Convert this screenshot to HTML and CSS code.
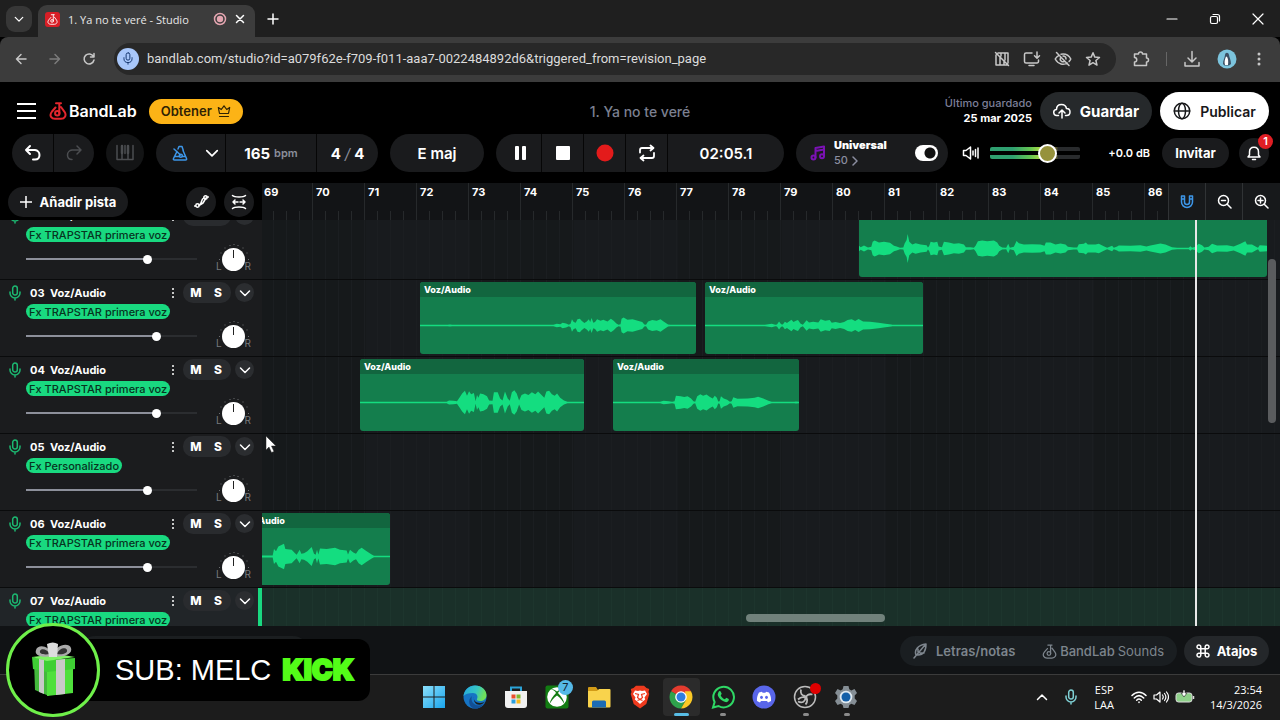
FILE: index.html
```html
<!DOCTYPE html>
<html lang="es">
<head>
  <meta charset="UTF-8">
  <title>1. Ya no te veré - Studio</title>
  <link rel="stylesheet" href="styles.css">
</head>
<body>
  <svg class="sprite" aria-hidden="true">
    <symbol id="mic" viewBox="0 0 12 16"><rect x="3.700" y="1" width="4.600" height="9" rx="2.300"/><path d="M1 7v1a5 5 0 0 0 10 0V7M6 13v2"/></symbol>
    <symbol id="down" viewBox="0 0 12 12"><path d="M1.500 4 6 8.500 10.500 4"/></symbol>
    <symbol id="logo" viewBox="0 0 18 18"><path d="M6.500 5.500 3 9.500C-.5 14 3 16.800 6 16.800h6c3.500 0 6-3.300 3.500-7L12 5M7 1.200h5M10.300 1.200v10"/><circle cx="8.300" cy="11.300" r="2.200"/></symbol>
    <symbol id="ticks" viewBox="0 0 34 30"><path d="M2.500 17v1M4 10.500v1M8 5.500v1M13 3v1M17 2v1M21 3v1M26 5.500v1M30 10.500v1M31.500 17v1"/></symbol>
    <symbol id="dots" viewBox="0 0 4 12"><circle cx="2" cy="2" r="1"/><circle cx="2" cy="6" r="1"/><circle cx="2" cy="10" r="1"/></symbol>
  </svg>

  <div class="tabs">
    <button class="tab-search" aria-label="Buscar pestañas"><svg class="icon" width="10" height="10"><use href="#down"/></svg></button>
    <div class="tab">
      <span class="favicon"><svg class="icon" width="11" height="11"><use href="#logo"/></svg></span>
      <span class="tab-title">1. Ya no te veré - Studio</span>
      <svg width="14" height="14" viewBox="0 0 14 14"><circle cx="7" cy="7" r="5.500" fill="none" stroke="#e3a5b0" stroke-width="1.500"/><circle cx="7" cy="7" r="3.200" fill="#e3a5b0"/></svg>
      <button class="plain" aria-label="Cerrar pestaña"><svg class="icon" width="10" height="10" viewBox="0 0 10 10"><path d="m1.500 1.500 7 7m0-7-7 7"/></svg></button>
    </div>
    <button class="plain new-tab" aria-label="Nueva pestaña"><svg class="icon" width="12" height="12" viewBox="0 0 12 12"><path d="M6 1v10M1 6h10"/></svg></button>
    <div class="window-buttons">
      <button class="plain" aria-label="Minimizar"><svg class="icon thin" width="12" height="12" viewBox="0 0 12 12"><path d="M1 6h10"/></svg></button>
      <button class="plain" aria-label="Restaurar"><svg class="icon thin" width="12" height="12" viewBox="0 0 12 12"><rect x="1.500" y="3.500" width="7" height="7" rx="1.500"/><path d="M4 1.500h4.500a2 2 0 0 1 2 2V8"/></svg></button>
      <button class="plain" aria-label="Cerrar"><svg class="icon thin" width="12" height="12" viewBox="0 0 12 12"><path d="m1 1 10 10m0-10L1 11"/></svg></button>
    </div>
  </div>

  <div class="browser-bar">
    <div class="nav">
      <button class="plain" aria-label="Atrás"><svg class="icon" width="14" height="14" viewBox="0 0 14 14"><path d="M12 7H2.500M7 2.500 2.500 7 7 11.500"/></svg></button>
      <button class="plain dim" aria-label="Adelante"><svg class="icon" width="14" height="14" viewBox="0 0 14 14"><path d="M2 7h9.500M7 2.500 11.500 7 7 11.500"/></svg></button>
      <button class="plain" aria-label="Recargar"><svg class="icon" width="14" height="14" viewBox="0 0 14 14"><path d="M11.500 4.500A5 5 0 1 0 12 8M12 1.500v3.500H8.500"/></svg></button>
    </div>
    <div class="omnibox">
      <span class="mic-badge"><svg class="icon thin" width="10" height="13"><use href="#mic"/></svg></span>
      <input class="url" type="text" aria-label="Dirección" value="bandlab.com/studio?id=a079f62e-f709-f011-aaa7-0022484892d6&amp;triggered_from=revision_page">
      <svg class="icon" width="16" height="16" viewBox="0 0 16 16"><path d="M2 4v10h11M4 2h10v10M6 6v8M10 10v4M7 2v3M11 2v7M1.500 1.500l13 13"/></svg>
      <svg class="icon" width="18" height="16" viewBox="0 0 18 16"><path d="M9 2H3a1.500 1.500 0 0 0-1.500 1.500v7A1.500 1.500 0 0 0 3 12h11a1.500 1.500 0 0 0 1.500-1.500V9M6 14.500h5M14 1v6M11.500 4.800 14 7.200l2.500-2.400"/></svg>
      <svg class="icon" width="18" height="16" viewBox="0 0 18 16"><path d="M5 4.300C3.300 5.200 2 6.500 1.200 8c3 5.500 8.500 6.500 12 4M7 3.200C11 2.500 15 4.500 16.800 8a9 9 0 0 1-1.700 2.400M6.500 6.500a3 3 0 0 0 4 4M9 5a3 3 0 0 1 3 3M2.500 1.500l12.500 13"/></svg>
      <svg class="icon" width="16" height="16" viewBox="0 0 16 16"><path d="m8 1.800 1.800 4.300 4.700.4-3.600 3 1.100 4.600L8 11.700 4 14.100l1.100-4.600-3.600-3 4.700-.4z"/></svg>
    </div>
    <div class="extensions">
      <svg class="icon" width="18" height="18" viewBox="0 0 18 18"><path d="M2.500 4h4a2 2 0 0 1 4 0h4v4a2 2 0 0 1 0 4v3.500h-12V12a2.200 2.200 0 0 0 0-4.500z"/></svg>
      <span class="bar-line"></span>
      <svg class="icon" width="18" height="18" viewBox="0 0 18 18"><path d="M9 1.500v10M5 8l4 4 4-4M2 12.500V16h14v-3.500"/></svg>
      <svg width="20" height="20" viewBox="0 0 20 20"><circle cx="10" cy="10" r="9.500" fill="#7cc4dd"/><path d="M8 6c.3-3 3.500-3 4 0 .2 2 2 5 2 9l-2 1.500H7.500L6 15c0-4 1.800-6 2-9z" fill="#3b4f63"/><path d="M9 7.500c2 0 2.500 4.500 2 8.500H8c-1-3 0-6 1-8.500z" fill="#fff"/></svg>
      <svg class="browser-menu" width="4" height="16" viewBox="0 0 4 16" fill="#c7c7c7"><circle cx="2" cy="3" r="1.500"/><circle cx="2" cy="8" r="1.500"/><circle cx="2" cy="13" r="1.500"/></svg>
    </div>
  </div>

  <header class="app-header">
    <div class="brand">
      <button class="plain" aria-label="Menú"><svg width="20" height="18" viewBox="0 0 20 18" stroke="#fff" stroke-width="2"><path d="M0 2h19M0 9h19M0 16h19"/></svg></button>
      <a class="logo" href="#"><svg class="icon red" width="18" height="18"><use href="#logo"/></svg>BandLab</a>
      <button class="get">Obtener <svg class="icon thin" width="14" height="14" viewBox="0 0 14 14"><path d="M2.500 9.500 1.300 3.500l3 2L7 1.800l2.700 3.700 3-2-1.200 6zM2.500 12.500h9"/></svg></button>
    </div>
    <h1 class="song">1. Ya no te veré</h1>
    <div class="save">
      <div class="saved"><span>Último guardado</span><b>25 mar 2025</b></div>
      <button class="pill guardar"><svg class="icon" width="18" height="16" viewBox="0 0 18 16"><path d="M5.500 12.500H4a3 3 0 0 1-.5-6C3.500 3 6 1.500 8.500 1.500S13 3 13.500 5.500c2 0 3.500 1.500 3.500 3.500s-1.500 3.500-3.500 3.500h-1M9 15V7.500M6 10l3-3 3 3"/></svg>Guardar</button>
      <button class="pill publicar"><svg class="icon" width="18" height="18" viewBox="0 0 18 18"><circle cx="9" cy="9" r="7.700"/><ellipse cx="9" cy="9" rx="3.500" ry="7.700"/><path d="M1.300 9h15.400"/></svg>Publicar</button>
    </div>
  </header>

  <div class="transport">
    <div class="group history">
      <button aria-label="Deshacer"><svg class="icon big" width="18" height="18" viewBox="0 0 18 18"><path d="M6 2 2 6l4 4M2 6h9a5 5 0 0 1 4.500 5c0 3-2 4.500-4.500 4.500H9"/></svg></button>
      <button class="off" aria-label="Rehacer"><svg class="icon" width="18" height="18" viewBox="0 0 18 18"><path d="m12 2 4 4-4 4M16 6H7a5 5 0 0 0-4.500 5c0 3 2 4.500 4.500 4.500"/></svg></button>
    </div>
    <button class="group piano off" aria-label="Instrumento"><svg class="icon" width="20" height="18" viewBox="0 0 20 18"><path d="M2 1.500v14h16v-14M7 9v6M13 9v6M10 1.500v8"/><path d="M7 2v7M13 2v7" stroke-width="2.500"/></svg></button>
    <div class="group tempo">
      <button class="metro" aria-label="Metrónomo"><svg class="icon blue" width="18" height="18" viewBox="0 0 18 18"><path d="M6 7.500 2.500 14.500q-.5 1.500 1 1.500h11q1.500 0 1-1.500L12 6.500M7 5 8 2.500h3l1.300 4M3 5l6.500 6M4.500 12.500h3.500m3.500 0h3"/><circle cx="9.800" cy="11.800" r="1.500"/></svg></button>
      <button class="more" aria-label="Opciones del metrónomo"><svg class="icon" width="14" height="14"><use href="#down"/></svg></button>
      <button class="bpm">165 <small>bpm</small></button>
      <button class="sign">4 <i>/</i> 4</button>
    </div>
    <button class="group key">E maj</button>
    <div class="group play">
      <button aria-label="Pausa"><svg width="14" height="16" viewBox="0 0 14 16" fill="#fff"><rect x="1" y="1" width="4" height="14" rx="1"/><rect x="8" y="1" width="4" height="14" rx="1"/></svg></button>
      <button aria-label="Detener"><svg width="16" height="16" viewBox="0 0 16 16"><rect x="1" y="1" width="14" height="14" rx="1" fill="#fff"/></svg></button>
      <button aria-label="Grabar"><svg width="18" height="18" viewBox="0 0 18 18"><circle cx="9" cy="9" r="8.500" fill="#e31b1b"/></svg></button>
      <button aria-label="Bucle"><svg class="icon loop" width="18" height="18" viewBox="0 0 18 18"><path d="M2 8.500V6q0-2 2-2h11M12.500 1.500 15.500 4l-3 2.500M16 9v3q0 2-2 2H3M5.500 11.500 2.500 14l3 2.500"/></svg></button>
      <button class="time">02:05.1</button>
    </div>
    <div class="group preset">
      <svg class="icon violet" width="16" height="16" viewBox="0 0 16 16"><path d="M5.500 12.500V3l8.500-1.500V11M5.500 6 14 4.500"/><circle cx="3.500" cy="12.500" r="2"/><circle cx="12" cy="11.300" r="2"/></svg>
      <a class="preset-name" href="#"><b>Universal</b><span>50 <svg class="icon" width="8" height="10" viewBox="0 0 8 10"><path d="m2 1 4 4-4 4"/></svg></span></a>
      <input class="switch" type="checkbox" checked aria-label="Activar Universal">
    </div>
    <div class="output">
      <svg class="icon" width="18" height="16" viewBox="0 0 18 16"><path d="M1.500 5.500v5H4l4.500 3.500V2L4 5.500zM11 6v4M13.500 4.500v7M16 3v10"/></svg>
      <input class="master" type="range" value="68" aria-label="Volumen general">
      <span class="db">+0.0 dB</span>
      <button class="pill invite">Invitar</button>
      <button class="round bell" aria-label="Notificaciones"><svg class="icon" width="16" height="16" viewBox="0 0 16 16"><path d="M2 12h12l-1.500-2V7c0-3-1.800-4.800-4.500-4.800S3.500 4 3.500 7v3zM6.500 14.500h3"/></svg><span class="count">1</span></button>
    </div>
  </div>

  <div class="editor-head">
    <div class="side-tools">
      <button class="pill add"><svg class="icon" width="12" height="12" viewBox="0 0 12 12"><path d="M6 0v12M0 6h12"/></svg>Añadir pista</button>
      <button class="round" aria-label="Automatización"><svg class="icon" width="15" height="15" viewBox="0 0 15 15"><circle cx="3.500" cy="11.500" r="1.700"/><circle cx="11.500" cy="3.500" r="1.700"/><path d="m5 11 1.500-1 2-5 1.500-1M9 9l3-5M5 11.500 9 9M13 3h1.500M.5 12h1"/></svg></button>
      <button class="round" aria-label="Ajustar vista"><svg class="icon" width="16" height="16" viewBox="0 0 16 16"><path d="M1.500 1.500c2 2 11 2 13 0M1.500 14.500c2-2 11-2 13 0M2 8h5m2 0h5M4 6 2 8l2 2M12 6l2 2-2 2"/></svg></button>
    </div>
    <div class="ruler">
      <span>69</span><span>70</span><span>71</span><span>72</span><span>73</span><span>74</span><span>75</span><span>76</span><span>77</span><span>78</span><span>79</span><span>80</span><span>81</span><span>82</span><span>83</span><span>84</span><span>85</span><span>86</span>
    </div>
    <div class="zoom-tools">
      <button aria-label="Imán"><svg class="icon blue" width="14" height="14" viewBox="0 0 14 14"><path d="M1.500 1h3v6a2.500 2.500 0 0 0 5 0V1h3v6a5.500 5.500 0 0 1-11 0zM1.500 4h3m5 0h3"/></svg></button>
      <button aria-label="Alejar"><svg class="icon" width="15" height="15" viewBox="0 0 15 15"><circle cx="6.500" cy="6.500" r="5"/><path d="M4.500 6.500h4M10.500 10.500l3.500 3.500"/></svg></button>
      <button aria-label="Acercar"><svg class="icon" width="15" height="15" viewBox="0 0 15 15"><circle cx="6.500" cy="6.500" r="5"/><path d="M4 6.500h5M6.500 4v5M10.500 10.500l3.500 3.500"/></svg></button>
    </div>
  </div>

  <main class="tracks">
    <section class="track">
      <div class="track-head">
        <div class="track-row"><svg class="icon green" width="12" height="16"><use href="#mic"/></svg><b>02</b><b class="name">Voz/Audio</b><button class="dots" aria-label="Opciones"><svg width="4" height="12"><use href="#dots"/></svg></button><span class="ms"><button>M</button><button>S</button></span><button class="fold" aria-label="Plegar"><svg class="icon" width="12" height="12"><use href="#down"/></svg></button></div>
        <button class="fx">Fx TRAPSTAR primera voz</button>
        <div class="levels"><input class="level" style="--level: 71%" type="range" value="72" aria-label="Volumen 02"><span class="pan"><svg class="ticks" width="34" height="30"><use href="#ticks"/></svg>L<input class="knob" type="range" aria-label="Panorama 02">R</span></div>
      </div>
      <div class="lane">
        <div class="clip" style="left: 597px; width: 408px"><span>&nbsp;</span><svg viewBox="55 -86 1225 172" preserveAspectRatio="none" data-wave="55,8 60,4 70,9 82,3 92,5 96,20 102,24 115,18 130,20 148,17 160,8 168,6 178,2 188,3 192,15 198,26 201,44 206,20 215,12 225,16 240,12 258,10 262,3 266,8 270,20 280,18 290,20 294,6 304,4 310,20 325,18 340,14 355,16 370,12 376,4 390,4 400,1 405,8 412,22 425,24 440,22 460,24 470,18 476,8 485,3 497,1 503,14 508,2 520,5 528,23 535,16 550,12 575,13 600,12 612,8 616,18 630,18 645,12 660,15 675,12 682,5 700,3 710,3 715,13 730,14 736,18 742,12 765,12 775,14 790,7 800,2 815,8 820,2 830,6 835,9 870,8 900,10 918,6 930,9 960,15 975,12 995,4 1010,1 1045,1 1050,7 1055,2 1065,5 1075,14 1085,10 1092,3 1105,5 1115,14 1130,9 1160,10 1180,6 1200,14 1215,22 1220,12 1235,12 1247,5 1253,2 1258,10 1270,9 1280,8"></svg></div>
      </div>
    </section>

    <section class="track">
      <div class="track-head">
        <div class="track-row"><svg class="icon green" width="12" height="16"><use href="#mic"/></svg><b>03</b><b class="name">Voz/Audio</b><button class="dots" aria-label="Opciones"><svg width="4" height="12"><use href="#dots"/></svg></button><span class="ms"><button>M</button><button>S</button></span><button class="fold" aria-label="Plegar"><svg class="icon" width="12" height="12"><use href="#down"/></svg></button></div>
        <button class="fx">Fx TRAPSTAR primera voz</button>
        <div class="levels"><input class="level" style="--level: 77%" type="range" value="78" aria-label="Volumen 03"><span class="pan"><svg class="ticks" width="34" height="30"><use href="#ticks"/></svg>L<input class="knob" type="range" aria-label="Panorama 03">R</span></div>
      </div>
      <div class="lane">
        <div class="clip" style="left: 158px; width: 276px"><span>Voz/Audio</span><svg viewBox="58 -83 801 166" preserveAspectRatio="none" data-wave="58,1 138,1 145,3 152,1 445,1 455,5 465,4 472,8 482,6 490,1 495,5 499,18 504,10 510,8 515,18 522,20 527,14 535,7 542,12 548,18 552,10 556,22 561,8 566,10 572,18 582,14 590,17 602,12 612,20 620,14 628,6 634,1 640,4 643,20 649,23 660,17 675,18 690,14 703,10 709,3 714,2 720,12 732,16 745,14 756,18 765,12 778,3 785,1 859,1"></svg></div>
        <div class="clip" style="left: 443px; width: 218px"><span>Voz/Audio</span><svg viewBox="886 -83 633 166" preserveAspectRatio="none" data-wave="886,1 1060,1 1070,4 1080,5 1090,2 1095,3 1101,12 1107,4 1112,3 1118,11 1124,7 1130,12 1137,17 1143,10 1150,14 1156,16 1163,6 1170,1 1175,8 1181,15 1188,9 1200,11 1215,9 1222,18 1235,14 1248,16 1254,8 1265,10 1278,7 1290,10 1300,16 1312,18 1322,13 1332,19 1345,12 1365,11 1390,8 1410,5 1427,3 1430,1 1519,1"></svg></div>
      </div>
    </section>

    <section class="track">
      <div class="track-head">
        <div class="track-row"><svg class="icon green" width="12" height="16"><use href="#mic"/></svg><b>04</b><b class="name">Voz/Audio</b><button class="dots" aria-label="Opciones"><svg width="4" height="12"><use href="#dots"/></svg></button><span class="ms"><button>M</button><button>S</button></span><button class="fold" aria-label="Plegar"><svg class="icon" width="12" height="12"><use href="#down"/></svg></button></div>
        <button class="fx">Fx TRAPSTAR primera voz</button>
        <div class="levels"><input class="level" style="--level: 77%" type="range" value="78" aria-label="Volumen 04"><span class="pan"><svg class="ticks" width="34" height="30"><use href="#ticks"/></svg>L<input class="knob" type="range" aria-label="Panorama 04">R</span></div>
      </div>
      <div class="lane">
        <div class="clip" style="left: 98px; width: 224px"><span>Voz/Audio</span><svg viewBox="-116 -83 649 166" preserveAspectRatio="none" data-wave="-116,1 135,1 142,6 155,5 165,4 172,14 180,26 188,34 194,20 200,33 206,24 214,28 219,4 223,22 227,14 232,26 242,24 252,18 258,6 268,5 272,30 283,30 290,12 297,6 304,32 312,12 318,5 324,30 331,36 338,26 345,6 352,22 362,26 372,22 382,30 392,24 400,32 410,22 418,14 424,32 432,34 440,24 448,20 455,26 464,14 475,6 485,1 533,1"></svg></div>
        <div class="clip" style="left: 351px; width: 186px"><span>Voz/Audio</span><svg viewBox="618 -83 541 166" preserveAspectRatio="none" data-wave="618,1 740,1 755,2 765,5 780,4 790,1 797,4 801,20 815,18 825,16 835,18 845,12 852,4 857,2 863,18 872,24 880,20 890,23 900,16 908,12 914,20 920,14 924,3 928,4 932,18 940,12 950,8 958,2 963,4 968,15 980,11 1010,12 1030,14 1040,17 1055,12 1070,5 1080,1 1145,1 1150,3 1159,1"></svg></div>
      </div>
    </section>

    <section class="track">
      <div class="track-head">
        <div class="track-row"><svg class="icon green" width="12" height="16"><use href="#mic"/></svg><b>05</b><b class="name">Voz/Audio</b><button class="dots" aria-label="Opciones"><svg width="4" height="12"><use href="#dots"/></svg></button><span class="ms"><button>M</button><button>S</button></span><button class="fold" aria-label="Plegar"><svg class="icon" width="12" height="12"><use href="#down"/></svg></button></div>
        <button class="fx">Fx Personalizado</button>
        <div class="levels"><input class="level" style="--level: 71%" type="range" value="72" aria-label="Volumen 05"><span class="pan"><svg class="ticks" width="34" height="30"><use href="#ticks"/></svg>L<input class="knob" type="range" aria-label="Panorama 05">R</span></div>
      </div>
      <div class="lane"></div>
    </section>

    <section class="track">
      <div class="track-head">
        <div class="track-row"><svg class="icon green" width="12" height="16"><use href="#mic"/></svg><b>06</b><b class="name">Voz/Audio</b><button class="dots" aria-label="Opciones"><svg width="4" height="12"><use href="#dots"/></svg></button><span class="ms"><button>M</button><button>S</button></span><button class="fold" aria-label="Plegar"><svg class="icon" width="12" height="12"><use href="#down"/></svg></button></div>
        <button class="fx">Fx TRAPSTAR primera voz</button>
        <div class="levels"><input class="level" style="--level: 71%" type="range" value="72" aria-label="Volumen 06"><span class="pan"><svg class="ticks" width="34" height="30"><use href="#ticks"/></svg>L<input class="knob" type="range" aria-label="Panorama 06">R</span></div>
      </div>
      <div class="lane">
        <div class="clip" style="left: -28px; width: 156px"><span>Voz/Audio</span><svg viewBox="42 -85 468 170" preserveAspectRatio="none" data-wave="42,2 126,3 150,3 158,3 162,22 168,16 175,30 192,38 196,22 215,20 225,10 230,5 239,20 244,8 252,10 262,16 275,28 282,8 287,5 291,20 295,6 300,24 320,22 345,26 360,20 380,18 384,6 390,20 400,12 408,8 416,20 425,26 440,16 455,6 462,1 510,1"></svg></div>
      </div>
    </section>

    <section class="track selected">
      <div class="track-head">
        <div class="track-row"><svg class="icon green" width="12" height="16"><use href="#mic"/></svg><b>07</b><b class="name">Voz/Audio</b><button class="dots" aria-label="Opciones"><svg width="4" height="12"><use href="#dots"/></svg></button><span class="ms"><button>M</button><button>S</button></span><button class="fold" aria-label="Plegar"><svg class="icon" width="12" height="12"><use href="#down"/></svg></button></div>
        <button class="fx">Fx TRAPSTAR primera voz</button>
      </div>
      <div class="lane"></div>
    </section>

    <div class="playhead"></div>
    <div class="scroll-v"></div>
    <div class="scroll-h"></div>
    <svg class="cursor" width="12" height="19" viewBox="0 0 12 19"><path d="M1 1v14l3-3 2.500 5.500 2.500-1L6.500 11H11z" fill="#fff" stroke="#222" stroke-width=".5"/></svg>
  </main>

  <footer class="app-footer">
    <div class="left-panel"></div>
    <div class="group panels">
      <button><svg class="icon" width="14" height="16" viewBox="0 0 14 16"><path d="M1 15 12 2M3 12c-2-5 2-10 10-11 0 6-2 11-8 11zM5 9V6m2 4h4"/></svg>Letras/notas</button>
      <button class="sounds"><svg class="icon" width="15" height="15"><use href="#logo"/></svg><b>BandLab</b> Sounds</button>
    </div>
    <button class="pill shortcuts"><svg class="icon" width="14" height="14" viewBox="0 0 14 14"><path d="M4.800 4.800h4.400v4.400H4.800zM4.800 4.800H3a1.900 1.900 0 1 1 1.800-1.900zM9.200 4.800V3a1.900 1.900 0 1 1 1.900 1.800zM9.200 9.200H11a1.900 1.900 0 1 1-1.800 1.900zM4.800 9.200V11a1.900 1.900 0 1 1-1.900-1.800z"/></svg>Atajos</button>
  </footer>

  <div class="taskbar">
    <div class="apps">
      <a href="#" aria-label="Inicio"><svg width="24" height="24" viewBox="0 0 24 24"><defs><linearGradient id="win" x2="1" y2="1"><stop stop-color="#8be0fb"/><stop offset="1" stop-color="#19a4ec"/></linearGradient></defs><path d="M1 1h10.500v10.500H1zM12.500 1H23v10.500H12.500zM1 12.500h10.500V23H1zM12.500 12.500H23V23H12.500z" fill="url(#win)"/></svg></a>
      <a href="#" aria-label="Edge"><svg width="24" height="24" viewBox="0 0 24 24"><defs><linearGradient id="edge" x2="1" y2=".3"><stop stop-color="#25a7e0"/><stop offset=".6" stop-color="#36c6c3"/><stop offset="1" stop-color="#6fe05a"/></linearGradient></defs><circle cx="12" cy="12" r="11.500" fill="#1674c4"/><path d="M.5 11C1.500 4.500 6.500.5 12 .5c7 0 11.500 5 11.500 9.500 0 4-3 6-6.500 6-2.500 0-3.500-1-3-2 1.500-3-.5-6-4-6-4.500 0-8 1-9.500 3z" fill="url(#edge)"/><path d="M9 11c-2 5 2 9.500 6.500 9.500 3 0 5-1 6.300-2.500C20 21.500 16 23.500 12 23.500 6 23 4 15 9 11z" fill="#124f94"/><path d="M11 12c-1 3 2 6 6 6 2.500 0 4-.8 5-1.500l-2 2c-5 3-10 0-9-6.500z" fill="#1c1c1c"/></svg></a>
      <a href="#" aria-label="Tienda"><svg width="24" height="24" viewBox="0 0 24 24"><path d="M7 7V2.500h10V7" fill="none" stroke="#2ba3d8" stroke-width="2"/><path d="M1 6h22v14a3 3 0 0 1-3 3H4a3 3 0 0 1-3-3z" fill="#f1f1f1"/><path d="M7.500 9.500h4v4h-4z" fill="#e94f2e"/><path d="M12.500 9.500h4v4h-4z" fill="#7fb82c"/><path d="M7.500 14.500h4v4h-4z" fill="#2b9fe0"/><path d="M12.500 14.500h4v4h-4z" fill="#f7b91d"/></svg></a>
      <a href="#" aria-label="Xbox"><svg width="24" height="24" viewBox="0 0 24 24"><rect x=".5" y=".5" width="23" height="23" rx="2" fill="#127c12"/><circle cx="12" cy="12" r="9.800" fill="#fff"/><path d="M6 4.500C8 3.500 10 5 12 6.500 14 5 16 3.500 18 4.500c-2 0-4 1.500-5 3.500 3 3 6 7 6.500 11.500C18 16 15 12.500 12 10.500 9 12.500 6 16 4.500 19.500 5 15 8 11 11 8 10 6 8 4.500 6 4.500z" fill="#127c12"/></svg><span class="xbox-count">7</span></a>
      <a href="#" aria-label="Archivos"><svg width="24" height="24" viewBox="0 0 24 24"><path d="M1 3q0-1 1-1h7l2 3v4H1z" fill="#d29b17"/><path d="M1 6h9l2-2h10.500q1 0 1 1v16.500q0 1-1 1H2q-1 0-1-1z" fill="#f9d34c"/><path d="M5 22.500V17q0-1.500 1.500-1.500h11Q19 15.500 19 17v5.500z" fill="#1d6cb5"/></svg></a>
      <a href="#" aria-label="Brave"><svg width="24" height="24" viewBox="0 0 24 24"><path d="M8 .8h8l2.500 2.200 2.700 1-.7 3 .8 2-3 10L12 23.500 5.700 19l-3-10 .8-2-.7-3 2.700-1z" fill="#ee3a1e"/><path d="M7 5.500 10 6l2-.5L14 6l3-.5 2 3.500-2.500 3.500.7 2-2.500 2L12 19l-2.700-2.500-2.500-2 .7-2L5 9z" fill="#fff"/><path d="m7 8.500 3.500 1-1 3 2.500 2 2.500-2-1-3 3.500-1M9.500 15.500l2.500-1 2.500 1" fill="none" stroke="#ee3a1e" stroke-width="1.200"/></svg></a>
      <a class="active" href="#" aria-label="Chrome"><svg width="24" height="24" viewBox="0 0 24 24"><path d="M12 12 2 6.300A11.500 11.500 0 0 1 22 6.300z" fill="#e33b2e"/><path d="M2 6.300A11.500 11.500 0 0 0 12 23.500l5-8.500-5-3z" fill="#2ea24c"/><path d="M22 6.300A11.500 11.500 0 0 1 12 23.500L17 15l-1-8.700z" fill="#fbc926"/><circle cx="12" cy="12" r="5.800" fill="#fff"/><circle cx="12" cy="12" r="4.500" fill="#2f7de1"/></svg></a>
      <a class="open" href="#" aria-label="WhatsApp"><svg width="24" height="24" viewBox="0 0 24 24"><path d="M2 22.500 3.600 17A10.300 10.300 0 1 1 7.500 21z" fill="#1c1c1c" stroke="#2fd765" stroke-width="2"/><path d="M7.500 7c1-1.500 2-1 2.500.3l.7 1.500-1 1.600c1 2 2.200 3 4.200 3.800l1.400-1.500 2.500 1.200c.5 2-1.600 3.500-3.300 3.200C10.500 16 7 12.500 6.700 9.500z" fill="#2fd765"/></svg></a>
      <a href="#" aria-label="Discord"><svg width="24" height="24" viewBox="0 0 24 24"><circle cx="12" cy="12" r="11.500" fill="#5966ea"/><path d="M7 7.500 10 6.700l.6 1h2.800l.6-1 3 .8c1.500 2.500 2.300 5.500 2 8.500L16 17.500l-1-1.500H9l-1 1.500L5 16c-.3-3 .5-6 2-8.500z" fill="#fff"/><ellipse cx="9.500" cy="12.300" rx="1.400" ry="1.600" fill="#5966ea"/><ellipse cx="14.500" cy="12.300" rx="1.400" ry="1.600" fill="#5966ea"/></svg></a>
      <a class="open" href="#" aria-label="OBS"><svg width="24" height="24" viewBox="0 0 24 24"><circle cx="12" cy="12" r="10.500" fill="#222" stroke="#bcbcbc" stroke-width="1.500"/><path d="M8 4.500c-1 4 1 6.500 4.500 6.500M19.500 9.500c-4-1-6.500 1-7 4M5 16.500c4 2 7 .5 7.500-3.500M12.500 11c2 2 2.500 6 0 8.500M12 12.500c-2.500-1-5 0-7 2" fill="none" stroke="#bcbcbc" stroke-width="1.800"/></svg><span class="rec"></span></a>
      <a class="open" href="#" aria-label="Configuración"><svg width="24" height="24" viewBox="0 0 24 24"><path d="M9.500 1h5l.8 3.200 2 1.200L20.500 4l2.500 4-2.300 2.500v3L23 16l-2.500 4-3.200-1.300-2 1.200-.8 3.100h-5l-.8-3.100-2-1.200L3.500 20 1 16l2.300-2.500v-3L1 8l2.500-4 3.200 1.400 2-1.200z" fill="#858e95"/><circle cx="12" cy="12" r="6.300" fill="#dfe9f1"/><circle cx="12" cy="12" r="4.500" fill="#145fa8"/></svg></a>
    </div>
    <div class="tray">
      <svg class="icon" width="12" height="12" viewBox="0 0 12 12"><path d="M1.500 8.500 6 4l4.500 4.500"/></svg>
      <svg class="icon teal" width="12" height="16"><use href="#mic"/></svg>
      <span class="lang">ESP<br>LAA</span>
      <div class="status">
        <svg class="icon" width="16" height="14" viewBox="0 0 16 14"><path d="M1 5.500c4-4.500 10-4.500 14 0M3.300 8c3-3 6.400-3 9.400 0M5.700 10.200c1.500-1.500 3.100-1.500 4.600 0M8 12v.5"/></svg>
        <svg class="icon thin" width="16" height="14" viewBox="0 0 16 14"><path d="M1 5v4h2.500L7 12V2L3.500 5zM9.500 5q1.500 2 0 4M11.500 3.500q2.800 3.500 0 7M13.500 2q4 5 0 10"/></svg>
        <svg width="20" height="14" viewBox="0 0 20 14"><rect x="1" y="3" width="16" height="9" rx="2.500" fill="#8fd18a" stroke="#ddd"/><path d="M18.500 6v3" stroke="#ddd" stroke-width="1.500"/><path d="M8 0h2v3h2l-3 4-3-4h2z" fill="#fff" stroke="#1c1c1c" stroke-width=".6"/></svg>
      </div>
      <span class="clock">23:54<br>14/3/2026</span>
    </div>
  </div>

  <div class="sub-alert">
    <div class="gift">
      <svg width="48" height="56" viewBox="0 0 48 56"><path d="M5 18 20 20v34L6 48z" fill="#44b83c"/><path d="M18 20h26v31l-26 3z" fill="#4fe03c"/><path d="M3 15 18 18v12L4 27zM18 18l28-2v11l-28 3z" fill="#3fcf34"/><path d="M3 15 28 12l18 3-28 4z" fill="#7df364"/><path d="M10 17l5 1v34l-5-2zM27 18l9-1v35l-9 1z" fill="#c9c9c9"/><path d="M24 14C20 3 9 2 7 8s6 8 17 6zM24 14C26 2 40 0 42 6s-7 10-18 8z" fill="#aaa"/><path d="M21 12c-3-5-9-6-10-3s4 4 10 3zM28 12c2-6 9-7 10-4s-4 5-10 4z" fill="#333"/><path d="M18 2q6-3 11 0l-1 13h-8z" fill="#ddd"/></svg>
    </div>
    <p>SUB: MELC <strong>KICK</strong></p>
  </div>

  <script src="waves.js"></script>
</body>
</html>
```

FILE: styles.css
```css
* {
  box-sizing: border-box;
}

body {
  margin: 0;
  height: 100vh;
  display: flex;
  flex-direction: column;
  overflow: hidden;
  position: relative;
  background: #000;
  color: #fff;
  font-family: Inter, "Liberation Sans", sans-serif;
  font-size: 12px;
}

button, input {
  font: inherit;
  color: inherit;
  margin: 0;
}

button {
  border: none;
  padding: 0;
  background: none;
  display: flex;
  align-items: center;
  justify-content: center;
  white-space: nowrap;
  cursor: pointer;
}

a {
  color: inherit;
  text-decoration: none;
}

svg {
  display: block;
  flex: none;
}

.sprite {
  position: absolute;
  width: 0;
  height: 0;
}

.icon {
  fill: none;
  stroke: currentColor;
  stroke-width: 1.5;
  stroke-linecap: round;
  stroke-linejoin: round;
}

.thin { stroke-width: 1.2; }
.loop { stroke-width: 1.8; }
.big { stroke-width: 2; }
.red { color: #e3262e; stroke-width: 2; }
.blue { color: #3d96e8; }
.violet { color: #7a12b4; stroke-width: 2; }
.green { color: #1cb871; }
.teal { color: #7fd0d4; }

/* browser */
.tabs {
  flex: none;
  height: 37px;
  display: flex;
  align-items: center;
  padding-left: 6px;
  background: #1f1f1f;
  font-family: "Open Sans", sans-serif;
}

.tab-search {
  width: 26px;
  height: 26px;
  border-radius: 9px;
  background: #373737;
}

.tab {
  align-self: flex-end;
  width: 217px;
  height: 32px;
  margin-left: 6px;
  padding: 0 10px 4px 7px;
  display: flex;
  align-items: center;
  gap: 8px;
  border-radius: 9px 9px 0 0;
  background: #3c3c3c;
}

.tab-title {
  flex: 1;
  font-size: 11px;
  color: #e8e8e8;
  white-space: nowrap;
}

.favicon {
  width: 15px;
  height: 15px;
  border-radius: 3px;
  display: grid;
  place-items: center;
  background: #d81e26;
}

.new-tab {
  margin-left: 12px;
}

.window-buttons {
  margin-left: auto;
  display: flex;
  gap: 31px;
  padding-right: 16px;
}

.browser-bar {
  flex: none;
  height: 45px;
  display: flex;
  align-items: center;
  padding: 0 19px 2px 14px;
  background: #3c3c3c;
  color: #c7c7c7;
  border-radius: 8px 8px 0 0;
}

.nav {
  display: flex;
  gap: 20px;
  width: 100px;
}

.dim {
  color: #7c7c7c;
}

.omnibox {
  flex: 1;
  height: 32px;
  display: flex;
  align-items: center;
  gap: 13px;
  padding: 0 15px 0 3px;
  border-radius: 16px;
  background: #282828;
}

.mic-badge {
  width: 22px;
  height: 22px;
  border-radius: 50%;
  display: grid;
  place-items: center;
  background: #a8c7fa;
  color: #16366f;
}

.url {
  flex: 1;
  min-width: 0;
  margin-left: -5px;
  padding: 0;
  border: none;
  outline: none;
  background: none;
  color: #dcdcdc;
  font-family: Roboto, sans-serif;
  font-size: 13px;
}

.extensions {
  display: flex;
  align-items: center;
  gap: 16px;
  padding-left: 16px;
}

.browser-menu {
  margin-left: 4px;
}

.bar-line {
  width: 1px;
  height: 14px;
  background: #666;
}

/* app header */
.app-header {
  flex: none;
  display: grid;
  grid-template-columns: 1fr auto 1fr;
  align-items: center;
  height: 52px;
  padding: 6px 11px 0;
}

.brand {
  display: flex;
  align-items: center;
  gap: 12px;
  padding-left: 6px;
}

.logo {
  display: flex;
  align-items: center;
  gap: 2px;
  font-size: 16px;
  font-weight: 600;
}

.get {
  height: 25px;
  padding: 0 12px;
  gap: 5px;
  border-radius: 13px;
  background: #fcb316;
  color: #2f2204;
  font-size: 13px;
  font-weight: 600;
}

.song {
  margin: 0;
  color: #7c8090;
  font-size: 14px;
  font-weight: 500;
}

.save {
  display: flex;
  align-items: center;
  justify-content: flex-end;
  gap: 8px;
}

.saved {
  display: flex;
  flex-direction: column;
  text-align: right;
  font-size: 11px;
  line-height: 15px;
}

.saved span {
  color: #7c7f98;
  font-weight: 500;
}

.pill {
  height: 30px;
  padding: 0 12px;
  gap: 8px;
  border-radius: 19px;
  background: #1a1b1d;
  font-weight: 700;
}

.guardar, .publicar {
  height: 38px;
  gap: 9px;
  font-size: 14px;
}

.guardar {
  width: 112px;
  background: #26292b;
  font-size: 15px;
}

.publicar {
  width: 109px;
  background: #fff;
  color: #17181a;
  font-weight: 600;
}

/* transport */
.transport {
  flex: none;
  display: flex;
  align-items: center;
  gap: 12px;
  height: 38px;
  margin-bottom: 11px;
  padding: 0 11px 0 12px;
}

.group {
  flex: none;
  display: flex;
  align-items: center;
  height: 38px;
  border-radius: 19px;
  background: #1a1b1d;
  overflow: hidden;
  font-size: 15px;
  font-weight: 700;
}

.group > button {
  height: 100%;
}

.group > button + button {
  border-left: 1px solid #060606;
}

.history > button { width: 41px; }
.off { color: #4b4d50; }
.piano { width: 38px; background: #131415; }
.metro { width: 42px; padding-left: 6px; }
.group > .more { width: 27px; border-left: none; }
.bpm { width: 91px; gap: 4px; }
.bpm small { color: #8b8e9b; font-size: 11px; font-weight: 600; }
.sign { width: 62px; gap: 4px; }
.sign i { color: #8b8e9b; font-weight: 400; }
.key { width: 94px; font-weight: 600; }
.play > button { width: 42px; }
.play > button:first-child { width: 45px; padding-left: 4px; }
.play > .time { width: 117px; font-weight: 600; }

.preset {
  width: 152px;
  padding: 0 10px 0 14px;
}

.preset-name {
  flex: 1;
  margin-left: 8px;
  font-size: 11px;
  line-height: 15px;
}

.preset-name b {
  display: block;
}

.preset-name span {
  display: flex;
  align-items: center;
  gap: 3px;
  color: #8b8ea0;
  font-weight: 500;
}

.switch {
  appearance: none;
  width: 23px;
  height: 16px;
  border-radius: 8px;
  background: radial-gradient(circle at 15px 8px, #111 5px, #fff 6px);
}

.output {
  margin-left: auto;
  display: flex;
  align-items: center;
  gap: 10px;
}

.master {
  appearance: none;
  width: 90px;
  height: 12px;
  border-radius: 2px;
  background:
    linear-gradient(#000, #000) center / 100% 4px no-repeat,
    linear-gradient(90deg, #2fa070 25%, #65c552 45%, #b5dc43 58%, #a3983a 70%, #292b2d 76%);
}

.master::-webkit-slider-thumb {
  appearance: none;
  width: 19px;
  height: 19px;
  border: 2px solid #fff;
  border-radius: 50%;
  background: #96923c;
}

.db {
  width: 60px;
  text-align: right;
  font-size: 11px;
  font-weight: 600;
}

.invite {
  width: 67px;
  margin-left: 2px;
  padding: 0;
  font-size: 13px;
}

.round {
  width: 30px;
  height: 30px;
  border-radius: 50%;
  background: #1a1b1d;
}

.bell {
  position: relative;
}

.count {
  position: absolute;
  top: -4px;
  right: -4px;
  width: 15px;
  height: 15px;
  border-radius: 50%;
  background: #e01e24;
  font-size: 11px;
  font-weight: 600;
  line-height: 15px;
}

/* ruler */
.editor-head {
  flex: none;
  height: 37px;
  display: flex;
}

.side-tools {
  flex: none;
  width: 262px;
  display: flex;
  align-items: center;
  gap: 8px;
  padding: 0 8px;
}

.add {
  width: 120px;
  margin-right: auto;
  font-size: 13px;
}

.ruler {
  flex: 1;
  min-width: 0;
  display: flex;
  overflow: hidden;
  background: #121416;
}

.ruler span {
  flex: none;
  width: 52px;
  padding: 2px 0 0 3px;
  border-left: 1px solid #26292b;
  font-size: 11px;
  font-weight: 700;
  background: repeating-linear-gradient(90deg, transparent 0 12px, #26292b 12px 13px) bottom / 100% 9px no-repeat;
}

.ruler span:first-child {
  margin-left: -2px;
}

.zoom-tools {
  display: flex;
  padding-right: 1px;
  background: #17191b;
}

.zoom-tools button {
  width: 37px;
  border-left: 1px solid #303335;
}

/* tracks */
.tracks {
  flex: 1;
  min-height: 0;
  position: relative;
  overflow: hidden;
}

.track {
  display: flex;
  height: 77px;
}

.track:first-child {
  margin-top: -17px;
}

.track-head {
  flex: none;
  width: 262px;
  padding: 2px 8px 0 9px;
  background: #1b1c1e;
  border-bottom: 1px solid #0a0b0c;
}

.track-row {
  display: flex;
  align-items: center;
  height: 21px;
  font-size: 11px;
}

.track-row b:first-of-type {
  width: 20px;
  margin-left: 9px;
}

.name {
  flex: 1;
}

.dots {
  width: 12px;
  height: 20px;
  margin-right: 4px;
  fill: #fff;
}

.ms {
  display: flex;
  padding: 0 2px;
  border-radius: 10px;
  background: #292b2e;
}

.ms button {
  width: 22px;
  height: 21px;
  font-size: 12px;
  font-weight: 800;
}

.fold {
  width: 19px;
  height: 19px;
  margin-left: 4px;
  border-radius: 50%;
  background: #2b2d30;
}

.fx {
  height: 15px;
  margin: 1px 0 0 17px;
  padding: 0 3px;
  border-radius: 8px;
  background: #19d980;
  color: #07341f;
  font-size: 11px;
  font-weight: 500;
}

.levels {
  display: flex;
  align-items: center;
  justify-content: space-between;
  height: 34px;
  padding: 0 3px 0 17px;
}

.level {
  appearance: none;
  width: 171px;
  height: 2px;
  background: linear-gradient(90deg, #8d909b var(--level), #2b2d30 var(--level));
}

.level::-webkit-slider-thumb {
  appearance: none;
  width: 9px;
  height: 9px;
  border-radius: 50%;
  background: #fff;
}

.pan {
  display: flex;
  align-items: flex-end;
  position: relative;
  color: #77797c;
  font-size: 10px;
  line-height: 10px;
}

.ticks {
  position: absolute;
  left: 1px;
  top: -6px;
  stroke: #6c6e71;
}

.knob {
  appearance: none;
  position: relative;
  width: 23px;
  height: 23px;
  border-radius: 50%;
  background: linear-gradient(#222, #222) 11px 2px / 1px 8px no-repeat, #fff;
}

.knob::-webkit-slider-thumb {
  appearance: none;
  opacity: 0;
}

.lane {
  flex: 1;
  position: relative;
  overflow: hidden;
  border-bottom: 1px solid #0a0b0c;
  background:
    repeating-linear-gradient(90deg, #1b1e21 0 1px, transparent 1px 13px) -2px 0 / 2600px 100%,
    repeating-linear-gradient(90deg, #16191b 0 104px, #181b1e 104px 208px);
}

.clip {
  position: absolute;
  top: 2px;
  height: 72px;
  display: flex;
  flex-direction: column;
  overflow: hidden;
  border-radius: 3px;
  background: #147e4d;
}

/* the first track is scrolled under the ruler */
.track:first-child .clip {
  background: #147e4d;
}

.clip span {
  flex: none;
  height: 15px;
  padding-left: 4px;
  background: #12663f;
  font-size: 9px;
  font-weight: 800;
  line-height: 15px;
}

.clip svg {
  width: 100%;
  flex: 1;
  min-height: 0;
  fill: #14dd80;
}

.selected .track-head {
  background: #212528;
  border-right: 4px solid #19d980;
  padding-right: 4px;
}

.selected .lane {
  background:
    repeating-linear-gradient(90deg, #1d352d 0 1px, transparent 1px 13px) -2px 0 / 2600px 100%,
    #1a3029;
}

.playhead {
  position: absolute;
  top: 0;
  bottom: 0;
  right: 83px;
  width: 2px;
  background: #e8e8e8;
}

.scroll-v {
  position: absolute;
  top: 39px;
  right: 4px;
  width: 8px;
  height: 164px;
  border-radius: 4px;
  background: #5a5c5e;
}

.scroll-h {
  position: absolute;
  left: 746px;
  bottom: 4px;
  width: 139px;
  height: 8px;
  border-radius: 4px;
  background: #71817b;
}

.cursor {
  position: absolute;
  left: 265px;
  top: 215px;
}

/* footer */
.app-footer {
  flex: none;
  height: 48px;
  display: flex;
  align-items: center;
  gap: 7px;
  padding: 2px 11px 0 80px;
  background: #111315;
}

.left-panel {
  width: 228px;
  height: 30px;
  margin-right: auto;
  border-radius: 15px;
  background: #1b1e20;
}

.panels {
  width: 277px;
  height: 30px;
  padding: 0 13px;
  justify-content: space-between;
  background: #1a1e21;
  color: #7d858d;
  font-size: 13px;
}

.panels > button {
  gap: 9px;
  font-weight: 600;
}

.panels > button + button {
  border: none;
  gap: 3px;
  font-weight: 400;
}

.panels b {
  font-weight: 500;
}

.shortcuts {
  width: 85px;
  gap: 7px;
  padding: 0;
  background: #24272a;
  font-size: 13px;
}

/* taskbar */
.taskbar {
  flex: none;
  height: 46px;
  display: grid;
  grid-template-columns: 1fr 450px 1fr;
  align-items: center;
  padding-bottom: 2px;
  border-top: 1px solid #3b3b3b;
  background: #1c1c1c;
}

.apps {
  grid-column: 2;
  display: flex;
  justify-content: space-between;
}

.apps a {
  position: relative;
  width: 37px;
  height: 38px;
  display: grid;
  place-items: center;
  border-radius: 4px;
}

.apps .active {
  background: #2b2b2b;
}

.active::after, .open::after {
  content: "";
  position: absolute;
  bottom: 0;
  left: 16px;
  width: 6px;
  height: 3px;
  border-radius: 2px;
  background: #8b8b8b;
}

.active::after {
  left: 11px;
  width: 15px;
  background: #58bde6;
}

.xbox-count, .rec {
  position: absolute;
  top: 2px;
  right: 3px;
  width: 15px;
  height: 15px;
  border-radius: 50%;
  background: #55b9e8;
  color: #123;
  font-size: 11px;
  line-height: 15px;
  text-align: center;
}

.rec {
  top: 5px;
  width: 11px;
  height: 11px;
  background: #e00000;
}

.tray {
  display: flex;
  align-items: center;
  justify-content: flex-end;
  padding-right: 18px;
  gap: 17px;
  font-family: "Open Sans", sans-serif;
  font-size: 11px;
  line-height: 15px;
}

.lang {
  text-align: center;
}

.status {
  display: flex;
  gap: 6px;
}

.clock {
  width: 50px;
  display: flex;
  justify-content: flex-end;
  text-align: right;
  white-space: nowrap;
}

/* stream alert */
.sub-alert {
  position: absolute;
  left: 6px;
  bottom: 3px;
  display: flex;
  align-items: center;
}

.gift {
  z-index: 1;
  width: 94px;
  height: 94px;
  display: grid;
  place-items: center;
  border: 3px solid #6ff04a;
  border-radius: 50%;
  background: #000;
}

.sub-alert p {
  margin: 0 0 0 -47px;
  padding: 0 16px 0 62px;
  border-radius: 12px;
  background: #000;
  font-family: "Liberation Sans", Arial, sans-serif;
  font-size: 29px;
  line-height: 62px;
  white-space: nowrap;
}

.sub-alert strong {
  margin-left: 3px;
  color: #53fc18;
  font-family: Inter, sans-serif;
  font-size: 28px;
  font-weight: 900;
  -webkit-text-stroke: 2px #53fc18;
}
```

FILE: waves.js
```js
// data-wave holds "x,amplitude" pairs, the shape is mirrored around the centre line
document.querySelectorAll('svg[data-wave]').forEach(function (svg) {
  const points = svg.dataset.wave.split(' ').map(p => p.split(',').map(Number));
  const top = points.map(([x, a]) => x + ',' + -Math.max(a, 2));
  const bottom = points.map(([x, a]) => x + ',' + Math.max(a, 2)).reverse();

  const shape = document.createElementNS('http://www.w3.org/2000/svg', 'polygon');
  shape.setAttribute('points', top.concat(bottom).join(' '));
  svg.appendChild(shape);
});
```
